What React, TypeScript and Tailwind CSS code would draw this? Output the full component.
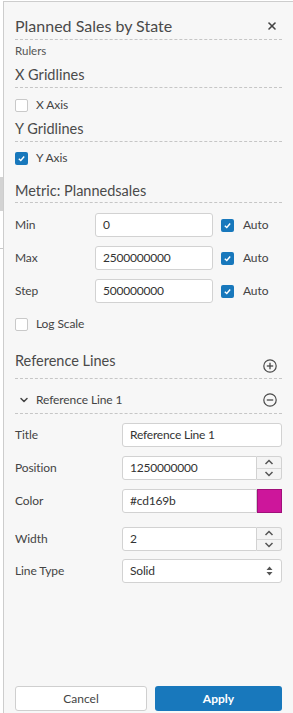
import { ChevronDown, X } from "lucide-react";

const dashed = "border-b border-dashed border-[#c6c6c6]";

function Check({ on }: { on?: boolean }) {
  return on ? (
    <span className="flex h-[13px] w-[13px] shrink-0 items-center justify-center rounded-[2px] bg-[#1878bc]">
      <svg width="9" height="9" viewBox="0 0 10 10" aria-hidden>
        <path d="M2 5.2 4.2 7.2 8 2.8" fill="none" stroke="#fff" strokeWidth="1.6" />
      </svg>
    </span>
  ) : (
    <span className="block h-[13px] w-[13px] shrink-0 rounded-[2px] border border-[#c9c9c9] bg-white" />
  );
}

function CircleIcon({ plus }: { plus?: boolean }) {
  return (
    <svg width="14" height="14" viewBox="0 0 14 14" aria-hidden>
      <circle cx="7" cy="7" r="6.2" fill="none" stroke="#4a4a4a" strokeWidth="1.2" />
      <path d="M3.8 7h6.4" stroke="#4a4a4a" strokeWidth="1.3" />
      {plus ? <path d="M7 3.8v6.4" stroke="#4a4a4a" strokeWidth="1.3" /> : null}
    </svg>
  );
}

function Caret({ up }: { up?: boolean }) {
  return (
    <svg width="10" height="6" viewBox="0 0 10 6" aria-hidden>
      <path
        d={up ? "M1.5 5 5 1.5 8.5 5" : "M1.5 1 5 4.5 8.5 1"}
        fill="none"
        stroke="#555"
        strokeWidth="1.5"
      />
    </svg>
  );
}

function Spinner() {
  return (
    <div className="flex w-[25px] shrink-0 flex-col rounded-r-[3px] border border-l-0 border-[#d2d2d2] bg-[#f4f4f4]">
      <div className="flex flex-1 items-center justify-center border-b border-[#d8d8d8]">
        <Caret up />
      </div>
      <div className="flex flex-1 items-center justify-center">
        <Caret />
      </div>
    </div>
  );
}

const inputCls =
  "flex h-[24px] items-center border border-[#d2d2d2] bg-white pl-[7px] text-[12px] tracking-[-0.2px] text-[#333]";
const labelCls = "text-[12px] tracking-[-0.1px] text-[#444]";
const headCls = "text-[14.5px] leading-[20px] text-[#4a4a4a]";

function MetricRow({ label, value }: { label: string; value: string }) {
  return (
    <div className="flex items-center">
      <span className={`w-[80px] ${labelCls}`}>{label}</span>
      <div className={`${inputCls} w-[118px] rounded-[3px]`}>{value}</div>
      <div className="ml-[8px]">
        <Check on />
      </div>
      <span className={`ml-[9px] ${labelCls}`}>Auto</span>
    </div>
  );
}

function RefRow({
  label,
  value,
  className,
  right,
}: {
  label: string;
  value: string;
  className?: string;
  right?: React.ReactNode;
}) {
  return (
    <div className={`flex h-[24px] items-center ${className ?? ""}`}>
      <span className={`w-[107px] shrink-0 ${labelCls}`}>{label}</span>
      <div className="flex h-[24px] flex-1">
        <div className={`${inputCls} flex-1 ${right ? "rounded-l-[3px]" : "rounded-[3px]"}`}>{value}</div>
        {right}
      </div>
    </div>
  );
}

export default function App() {
  return (
    <div className="flex h-[713px] w-[293px] overflow-hidden bg-white pt-[1px] font-['Lato','Liberation_Sans',sans-serif]">
      <div className="flex w-[3px] shrink-0 flex-col">
        <div className="mt-[176px] h-[34px] bg-[#d3d3d3]" />
        <div className="mt-[37px] h-[1px] bg-[#c8c8c8]" />
      </div>
      <div className="flex flex-1 flex-col border-l border-t border-[#cdcdcd] bg-[#f7f7f7] px-[11px]">
        <div className={`flex h-[38px] items-start justify-between pt-[13px] ${dashed}`}>
          <span className="text-[16px] leading-[22px] text-[#4a4a4a]">Planned Sales by State</span>
          <X className="mr-[4px] mt-[5px] h-[12px] w-[12px] text-[#444]" strokeWidth={3.2} />
        </div>

        <div className="pt-[3px] text-[11.5px] leading-[16px] text-[#555]">Rulers</div>

        <div className={`mt-[6px] pb-[2px] ${headCls} ${dashed}`}>X Gridlines</div>
        <div className="mt-[9px] flex h-[16px] items-center">
          <Check />
          <span className={`ml-[8px] ${labelCls}`}>X Axis</span>
        </div>

        <div className={`mt-[6px] pb-[2px] ${headCls} ${dashed}`}>Y Gridlines</div>
        <div className="mt-[8px] flex h-[16px] items-center">
          <Check on />
          <span className={`ml-[8px] ${labelCls}`}>Y Axis</span>
        </div>

        <div className={`mt-[15px] pb-[1px] ${headCls} ${dashed}`}>Metric: Plannedsales</div>

        <div className="mt-[10px] flex flex-col gap-[9px]">
          <MetricRow label="Min" value="0" />
          <MetricRow label="Max" value="2500000000" />
          <MetricRow label="Step" value="500000000" />
        </div>

        <div className="mt-[13px] flex h-[16px] items-center">
          <Check />
          <span className={`ml-[8px] ${labelCls}`}>Log Scale</span>
        </div>

        <div className={`mt-[19px] flex h-[28px] items-start justify-between ${dashed}`}>
          <span className={headCls}>Reference Lines</span>
          <div className="mr-[5px] self-end pb-[5px]">
            <CircleIcon plus />
          </div>
        </div>

        <div className={`flex h-[35px] items-center justify-between pt-[8px] ${dashed}`}>
          <div className="flex items-center">
            <ChevronDown className="ml-[3px] h-[12px] w-[12px] text-[#444]" strokeWidth={3} />
            <span className={`ml-[6px] ${labelCls}`}>Reference Line 1</span>
          </div>
          <div className="mr-[5px]">
            <CircleIcon />
          </div>
        </div>

        <RefRow label="Title" value="Reference Line 1" className="mt-[9px]" />
        <RefRow label="Position" value="1250000000" className="mt-[9px]" right={<Spinner />} />
        <RefRow
          label="Color"
          value="#cd169b"
          className="mt-[9px]"
          right={<div className="w-[25px] shrink-0 border border-[#a0107a] bg-[#cd169b]" />}
        />
        <RefRow label="Width" value="2" className="mt-[14px]" right={<Spinner />} />
        <div className="mt-[8px] flex h-[24px] items-center">
          <span className={`w-[107px] shrink-0 ${labelCls}`}>Line Type</span>
          <div className={`${inputCls} flex-1 justify-between rounded-[3px] pr-[8px]`}>
            <span>Solid</span>
            <svg width="7" height="10" viewBox="0 0 7 10" aria-hidden>
              <path d="M3.5 0.5 6.5 4H0.5Z M3.5 9.5 6.5 6H0.5Z" fill="#555" />
            </svg>
          </div>
        </div>

        <div className="mt-auto mb-[2px] flex gap-[8px]">
          <button className="h-[25px] w-[132px] rounded-[3px] border border-[#cfcfcf] bg-white text-[12px] text-[#444]">
            Cancel
          </button>
          <button className="h-[25px] flex-1 rounded-[3px] bg-[#1878bc] text-[12px] font-bold text-white">
            Apply
          </button>
        </div>
      </div>
    </div>
  );
}
